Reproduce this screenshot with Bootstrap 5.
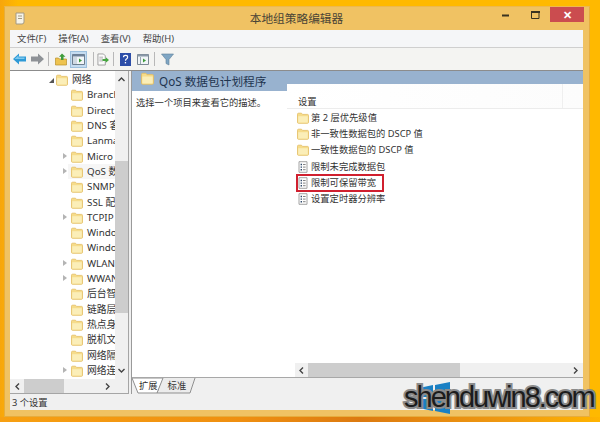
<!DOCTYPE html>
<html lang="zh-CN">
<head>
<meta charset="UTF-8">
<title>本地组策略编辑器</title>
<link rel="stylesheet" href="https://cdn.jsdelivr.net/npm/bootstrap@5.3.0/dist/css/bootstrap.min.css">
<style>
    html, body { height: 422px; overflow: hidden; }
    body {
        position: relative;
        width: 600px;
        padding: 6px 10px 0 4px;
        background: linear-gradient(90deg, #f7a50c 0, #ffb900 3%, #ffb900 100%);
        font-family: "Noto Sans", "Noto Sans CJK SC", sans-serif;
        font-size: 9.3px;
        color: #333;
    }
    .mgl-3 { margin-left: 3px; }
    .mgl-4 { margin-left: 4px; }
    .mgl-5 { margin-left: 5px; }
    .mgl-6 { margin-left: 6px; }
    .bottom-glow {
        position: absolute; left: 0; right: 0; bottom: 0; height: 5px;
        background: linear-gradient(90deg, #f7a012 0, #ef8f10 40%, #dc7a10 60%, #f09a10 85%, #ffb400 100%);
    }
    .win { width: 586px; height: 411px; padding: 0 6px 6px 5px; background: #f0c263; border: 1px solid #e7ad3d; border-top-color: #edb84f; }
    .titlebar { height: 23px; flex: none; position: relative; }
    .title-text { font-family: "Noto Sans CJK SC", sans-serif; font-size: 11.7px; color: #4a4436; line-height: 21px; }
    .app-ico { position: absolute; left: 5px; top: 5px; }
    .win-btns { position: absolute; right: -1px; top: 0; }
    .win-btn { width: 30px; height: 16px; }
    .btn-close-x { width: 34px; height: 15px; background: #cb4c4f; color: #fff; font-size: 11px; font-weight: 700; line-height: 15px; text-align: center; }
    .menubar { height: 18px; flex: none; background: #f5f6f8; border-bottom: 1px solid #cfcfcf; padding-left: 7px; gap: 12px; line-height: 17px; font-size: 9.4px; color: #444; }
    .toolbar { height: 23px; flex: none; background: #f4f4f2; border-bottom: 1px solid #8c8c8c; padding-left: 3px; }
    .tb-sep { width: 1px; height: 14px; background: #b8b8b8; }
    .tb-active { background: #c5dcf0; border: 1px solid #9cc0de; height: 17px; display: flex; align-items: center; justify-content: center; width: 17px; }
    .panes { min-height: 0; background: #f0f0f0; }
    .tree-pane { width: 119px; flex: none; background: #fff; border-right: 1px solid #a5a5a5; border-bottom: 1px solid #a5a5a5; margin-right: 2px; }
    .tree-body { min-height: 0; }
    .tree-list { width: 105px; padding-top: 1px; overflow: hidden; }
    .tree-row { height: 15.32px; line-height: 15.32px; white-space: nowrap; overflow: hidden; position: relative; font-size: 9.8px; }
    .tree-row svg.fld { position: absolute; top: 2px; left: 61px; }
    .tree-row span { position: absolute; left: 77px; }
    .tree-row.top svg.fld { left: 46px; }
    .tree-row.top span { left: 62px; }
    .tree-row.sel { background: linear-gradient(90deg, transparent 58px, #f6f6f6 58px); }
    .tw { position: absolute; top: 4px; left: 53px; width: 0; height: 0; border-style: solid; border-width: 3.5px 0 3.5px 4px; border-color: transparent transparent transparent #b4b4b4; }
    .tw-open { position: absolute; top: 6px; left: 39px; width: 0; height: 0; border-style: solid; border-width: 0 0 5px 5px; border-color: transparent transparent #555 transparent; }
    .vscroll { width: 13px; flex: none; background: #f0f0f0; position: relative; }
    .v-thumb { position: absolute; left: 0; right: 0; top: 90px; height: 152px; background: #cdcdcd; }
    .sb-arrow { position: absolute; color: #555; }
    .sb-up { left: 3px; top: 6px; }
    .sb-down { left: 3px; bottom: 6px; }
    .hscroll { height: 14px; flex: none; background: #f0f0f0; position: relative; }
    .h-thumb { position: absolute; top: 0; bottom: 0; background: #cdcdcd; }
    .tree-thumb { left: 14px; width: 40px; }
    .list-thumb { left: 13px; width: 152px; }
    .tree-left { left: 5px; top: 4px; }
    .tree-right { right: 18px; top: 4px; }
    .list-left { left: 4px; top: 4px; }
    .list-right { right: 5px; top: 4px; }
    .right-pane { border-left: 1px solid #9a9a9a; background: #fff; min-width: 0; position: relative; }
    .ext-head { height: 20px; flex: none; background: #98b2cf; color: #1f3550; font-size: 11.7px; line-height: 20px; padding-left: 27px; position: relative; }
    .ext-head svg { position: absolute; left: 9px; top: 1px; }
    .ext-body { min-height: 0; border-bottom: 1px solid #a8a8a8; position: relative; }
    .desc-col { width: 155px; flex: none; padding: 4px 0 0 4px; line-height: 15px; }
    .list-col { min-width: 0; margin-top: -7px; background: #fff; border-top-left-radius: 8px; position: relative; }
    .list-head { height: 25px; flex: none; border-bottom: 1px solid #ececec; padding: 10px 0 0 11px; line-height: 15px; background: linear-gradient(90deg, #fff, #fcfcfc); position: relative; }
    .list-head::after { content: ""; position: absolute; right: 20px; top: 0; bottom: 0; border-left: 1px solid #efefef; }
    .list-rows { padding: 1px 0 0 10px; }
    .list-row { height: 16.2px; line-height: 16.2px; white-space: nowrap; gap: 2px; }
    .list-row.hit { outline: 2px solid #d0202f; outline-offset: -1px; width: 86px; }
    .tabstrip { height: 16px; flex: none; background: #f0f0f0; position: relative; padding-left: 7px; gap: 10px; line-height: 16px; }
    .tabstrip svg { position: absolute; left: 0; top: 0; }
    .tabstrip span { position: relative; }
    .statusbar { height: 16px; flex: none; background: #f0f0f0; padding-left: 2px; line-height: 17px; }
    .mark-wrap { position: absolute; left: 402px; top: 381px; width: 198px; height: 36px; }
    .mark-wrap svg { position: absolute; left: 16px; top: 1px; }
    .mark-text { position: absolute; left: 2px; top: 0; font-family: "Liberation Sans", sans-serif; font-size: 29px; line-height: 33px; letter-spacing: -2px; color: #1c1c1c; -webkit-text-stroke: 4px #8b8b8b; paint-order: stroke fill; white-space: nowrap; }
</style>
</head>
<body>
<svg width="0" height="0" class="position-absolute">
    <defs>
        <symbol id="fld" viewBox="0 0 12 12">
            <path d="M.5 2.2q0-1 1-1h3l1 1.2h5q1 0 1 1v6.9q0 1-1 1h-9q-1 0-1-1z" fill="#f6dc8a" stroke="#e3bd62" stroke-width=".8"/>
            <path d="M1.2 4.2h9.600v6.400H1.200z" fill="#fbeeb8"/>
        </symbol>
        <symbol id="doc" viewBox="0 0 12 12">
            <path d="M2 .7h8v10.600H2z" fill="#fdfdfd" stroke="#9a9a9a" stroke-width=".9"/>
            <path d="M3.600 2.800h1.400v1.400H3.600zM3.600 5.400h1.400v1.400H3.600zM3.600 8h1.400v1.400H3.600z" fill="#2f4a6c"/>
            <path d="M6 3.500h2.600M6 6.100h2.600M6 8.700h2.600" stroke="#777" stroke-width=".9"/>
        </symbol>
    </defs>
</svg>

<div class="win d-flex flex-column">
    <div class="titlebar d-flex justify-content-center">
        <svg class="app-ico" width="11" height="13" viewBox="0 0 11 13"><path d="M1 1h8v9q0 2-2 2H1z" fill="#f6f3e8" stroke="#a39a84"/><path d="M3 4h4M3 6.500h4" stroke="#a39a84"/></svg>
        <div class="title-text">本地组策略编辑器</div>
        <div class="win-btns d-flex">
            <div class="win-btn d-flex align-items-center justify-content-center"><svg width="7" height="3"><path d="M0 1.500h7" stroke="#3a3320" stroke-width="2"/></svg></div>
            <div class="win-btn d-flex align-items-center justify-content-center"><svg width="9" height="8"><path d="M.5 1.500h7.500v6H.5z" fill="none" stroke="#3a3320"/><path d="M0 1h9" stroke="#3a3320" stroke-width="2"/></svg></div>
            <div class="btn-close-x">✕</div>
        </div>
    </div>

    <div class="menubar d-flex">
        <div>文件(F)</div><div>操作(A)</div><div>查看(V)</div><div>帮助(H)</div>
    </div>

    <div class="toolbar d-flex align-items-center">
        <svg width="13" height="12" viewBox="0 0 13 12"><path d="M0 6l6-5.500v3h7v5H6v3z" fill="#2e9ad6"/><path d="M1.500 6l4-3.500v2h6v1.500z" fill="#7cc8ee"/></svg>
        <svg width="13" height="12" class="mgl-5" viewBox="0 0 13 12"><path d="M13 6L7 .5v3H0v5h7v3z" fill="#8e9296"/></svg>
        <div class="tb-sep mgl-4"></div>
        <svg width="12" height="13" class="mgl-6" viewBox="0 0 12 13"><path d="M.5 5h3l1 1h7v6H.5z" fill="#eec34f" stroke="#b98f2a" stroke-width=".7"/><path d="M7 .5l3.500 3.200H8.500V7H6V3.700H4z" fill="#3f9c3a"/></svg>
        <div class="tb-active mgl-3"><svg width="13" height="11" viewBox="0 0 13 11"><path d="M.5.500h12v10H.5z" fill="#f1f5f8" stroke="#6d7f90"/><path d="M.5.500h12v2H.5z" fill="#6d8199"/><path d="M1 3h4v7H1z" fill="#cfd9e2"/><path d="M7 4.500l3 2-3 2z" fill="#3f9c3a"/></svg></div>
        <div class="tb-sep mgl-6"></div>
        <svg width="12" height="13" class="mgl-3" viewBox="0 0 13 13"><path d="M1 .5h6l2 2v10H1z" fill="#fbfbfb" stroke="#9b9b9b"/><path d="M2.500 4h4M2.500 6h4M2.500 8h4" stroke="#aaa"/><path d="M6 6h3.500V4l3.500 3-3.500 3V8H6z" fill="#46a83f"/></svg>
        <div class="tb-sep mgl-4"></div>
        <svg width="11" height="13" class="mgl-6" viewBox="0 0 11 13"><path d="M0 0h11v13H0z" fill="#2d4ea8"/><path d="M3.500 4.300q0-2 2.100-2t2 1.900q0 1-1.200 1.800-.9.600-.9 1.700" fill="none" stroke="#fff" stroke-width="1.200"/><path d="M4.800 9h1.300v1.400H4.800z" fill="#fff"/></svg>
        <svg width="12" height="11" class="mgl-6" viewBox="0 0 12 11"><path d="M.5.500h11v10H.5z" fill="#f1f5f8" stroke="#7c8894"/><path d="M.5.500h11v2H.5z" fill="#8a99a8"/><path d="M6 4.500l3 2-3 2z" fill="#3f9c3a"/><path d="M3.500 3v7" stroke="#9aa7b3"/></svg>
        <div class="tb-sep mgl-5"></div>
        <svg width="13" height="13" class="mgl-6" viewBox="0 0 13 13"><path d="M.5 1h12L8 6.500V12L5 10.500v-4z" fill="#7fa6c4" stroke="#5f8199" stroke-width=".6"/></svg>
    </div>

    <div class="panes d-flex flex-grow-1">
        <div class="tree-pane d-flex flex-column">
            <div class="tree-body d-flex flex-grow-1">
                <div class="tree-list flex-grow-1" id="tree"></div>
                <div class="vscroll">
                    <div class="v-thumb"></div>
                    <svg class="sb-arrow sb-up" width="7" height="5"><path d="M.5 4l3-3 3 3" fill="none" stroke="#444" stroke-width="1.400"/></svg>
                    <svg class="sb-arrow sb-down" width="7" height="5"><path d="M.5 1l3 3 3-3" fill="none" stroke="#444" stroke-width="1.400"/></svg>
                </div>
            </div>
            <div class="hscroll">
                <div class="h-thumb tree-thumb"></div>
                <svg class="sb-arrow tree-left" width="5" height="7"><path d="M4 .5l-3 3 3 3" fill="none" stroke="#444" stroke-width="1.400"/></svg>
                <svg class="sb-arrow tree-right" width="5" height="7"><path d="M1 .5l3 3-3 3" fill="none" stroke="#444" stroke-width="1.400"/></svg>
            </div>
        </div>

        <div class="right-pane d-flex flex-column flex-grow-1">
            <div class="ext-head">
                <svg width="13" height="13"><use href="#fld"/></svg>
                QoS 数据包计划程序
            </div>
            <div class="ext-body d-flex flex-grow-1">
                <div class="desc-col">选择一个项目来查看它的描述。</div>
                <div class="list-col d-flex flex-column flex-grow-1">
                    <div class="list-head">设置</div>
                    <div class="list-rows flex-grow-1" id="rows"></div>
                    <div class="hscroll ms-2">
                        <div class="h-thumb list-thumb"></div>
                        <svg class="sb-arrow list-left" width="5" height="7"><path d="M4 .5l-3 3 3 3" fill="none" stroke="#444" stroke-width="1.400"/></svg>
                        <svg class="sb-arrow list-right" width="5" height="7"><path d="M1 .5l3 3-3 3" fill="none" stroke="#444" stroke-width="1.400"/></svg>
                    </div>
                </div>
            </div>
            <div class="tabstrip d-flex">
                <svg width="64" height="16" viewBox="0 0 64 16">
                    <path d="M30 0l-5 15H58l5-15" fill="#ececec" stroke="#8f8f8f"/>
                    <path d="M0 0l6 15H25L31 0z" fill="#fff" stroke="#8f8f8f"/>
                </svg>
                <span>扩展</span><span>标准</span>
            </div>
        </div>
    </div>

    <div class="statusbar">3 个设置</div>
</div>

<div class="bottom-glow"></div>

<div class="mark-wrap">
    <svg width="34" height="32" viewBox="0 0 34 32">
        <path d="M1 6l14-3v12H1zM17 3l15-3v15H17zM1 17h14v12L1 26zM17 17h15v15l-15-3z" fill="#1a80c4"/>
    </svg>
    <div class="mark-text">shenduwin8.com</div>
</div>

<script>
    const treeItems = [
        ['网络', 'open'], ['Branch'], ['Direct'], ['DNS 客'], ['Lanman'], ['Micro', 'tw'], ['QoS 数', 'sel'],
        ['SNMP'], ['SSL 配'], ['TCPIP', 'tw'], ['Windo'], ['Windo'], ['WLAN', 'tw'], ['WWAN', 'tw'],
        ['后台智'], ['链路层'], ['热点身'], ['脱机文'], ['网络隔'], ['网络连', 'tw']
    ];
    document.getElementById('tree').innerHTML = treeItems.map(([name, flag]) => {
        const cls = flag === 'open' ? 'top' : flag === 'sel' ? 'sel' : '';
        const twisty = flag === 'open' ? '<i class="tw-open"></i>' : (flag === 'tw' || flag === 'sel') ? '<i class="tw"></i>' : '';
        return `<div class="tree-row ${cls}">${twisty}<svg class="fld" width="12" height="12"><use href="#fld"/></svg><span>${name}</span></div>`;
    }).join('');

    const listItems = [
        ['fld', '第 2 层优先级值'], ['fld', '非一致性数据包的 DSCP 值'], ['fld', '一致性数据包的 DSCP 值'],
        ['doc', '限制未完成数据包'], ['doc', '限制可保留带宽', 'hit'], ['doc', '设置定时器分辨率']
    ];
    document.getElementById('rows').innerHTML = listItems.map(([ico, name, hit]) =>
        `<div class="list-row d-flex align-items-center ${hit || ''}"><svg width="12" height="12"><use href="#${ico}"/></svg><span>${name}</span></div>`
    ).join('');
</script>
<script src="https://cdn.jsdelivr.net/npm/bootstrap@5.3.0/dist/js/bootstrap.bundle.min.js"></script>
</body>
</html>
